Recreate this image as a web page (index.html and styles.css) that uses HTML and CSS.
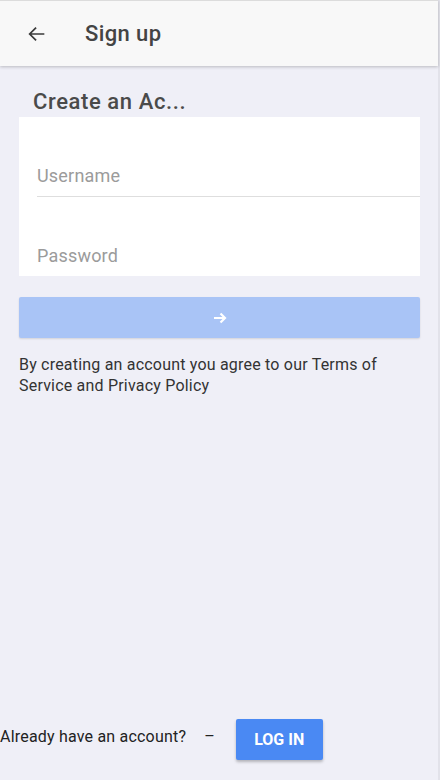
FILE: index.html
```html
<!DOCTYPE html>
<html>
<head>
<meta charset="utf-8">
<link rel="stylesheet" href="styles.css">
</head>
<body>
<div class="screen">
  <header class="appbar">
    <svg class="back" width="22" height="22" viewBox="0 0 24 24"><path d="M20 12H5M11 5l-7 7 7 7" fill="none" stroke="#3a3a3a" stroke-width="1.9"/></svg>
    <span class="title">Sign up</span>
  </header>
  <main class="content">
    <h2 class="heading">Create an Ac...</h2>
    <div class="card">
      <div class="field underline"><span class="ph">Username</span></div>
      <div class="field"><span class="ph">Password</span></div>
    </div>
    <div class="submit">
      <svg width="16" height="16" viewBox="0 0 16 16"><path d="M2 8h11M8.5 3.5L13 8l-4.5 4.5" fill="none" stroke="#fff" stroke-width="2.2"/></svg>
    </div>
    <p class="terms">By creating an account you agree to our Terms of Service and Privacy Policy</p>
  </main>
  <footer class="bottom">
    <span class="already">Already have an account?</span>
    <span class="dash">–</span>
    <button class="login">LOG IN</button>
  </footer>
</div>
</body>
</html>
```
FILE: styles.css
```css
html, body { margin: 0; padding: 0; }
body { font-family: Roboto, "Noto Sans", sans-serif; background: #efeff7; }
.screen {
  width: 440px; height: 780px; display: flex; flex-direction: column;
  background: #efeff7; box-sizing: border-box;
  border-right: 2px solid #e2e2ea;
  position: relative;
}
.appbar {
  height: 66px; flex: none; display: flex; align-items: center;
  background: #f8f8f8; border-top: 1px solid #dcdcdc; box-sizing: border-box;
  box-shadow: 0 1px 3px rgba(0,0,0,0.22);
  position: relative; z-index: 1;
}
.back { margin-left: 26px; }
.title { margin-left: 37px; font-size: 22px; color: #444; font-weight: 500; letter-spacing: 0.4px; }
.content { flex: 1; padding: 0 18px 0 19px; }
.heading { margin: 22px 0 0 14px; font-size: 22px; font-weight: 500; color: #4a4a4a; line-height: 28px; height: 29px; letter-spacing: 0.6px; }
.card { background: #fff; height: 159px; padding-left: 18px; }
.field { height: 80px; box-sizing: border-box; display: flex; align-items: flex-end; padding-bottom: 10px; }
.underline { border-bottom: 1px solid #dedede; }
.ph { font-size: 18px; color: #9b9b9b; letter-spacing: 0.2px; }
.field:last-child { height: 79px; padding-bottom: 10px; }
.submit {
  margin-top: 21px; height: 41px; background: #a9c4f6; border-radius: 2px;
  display: flex; align-items: center; justify-content: center;
  box-shadow: 0 1px 2px rgba(0,0,0,0.12);
}
.terms { margin: 16px 0 0; font-size: 16px; line-height: 21px; color: #333; letter-spacing: 0.2px; }
.bottom { flex: none; height: 41px; display: flex; align-items: flex-start; margin-bottom: 20px; }
.already { font-size: 16px; color: #222; margin-top: 8px; letter-spacing: 0.2px; }
.dash { font-size: 16px; color: #222; margin: 8px 0 0 18px; }
.login {
  margin-left: 21px; width: 87px; height: 41px; border: none; border-radius: 2px;
  background: #4a89f3; color: #fff; font-family: Roboto, sans-serif; font-weight: 700; font-size: 16px;
  box-shadow: 0 2px 3px rgba(0,0,0,0.25);
}
```
